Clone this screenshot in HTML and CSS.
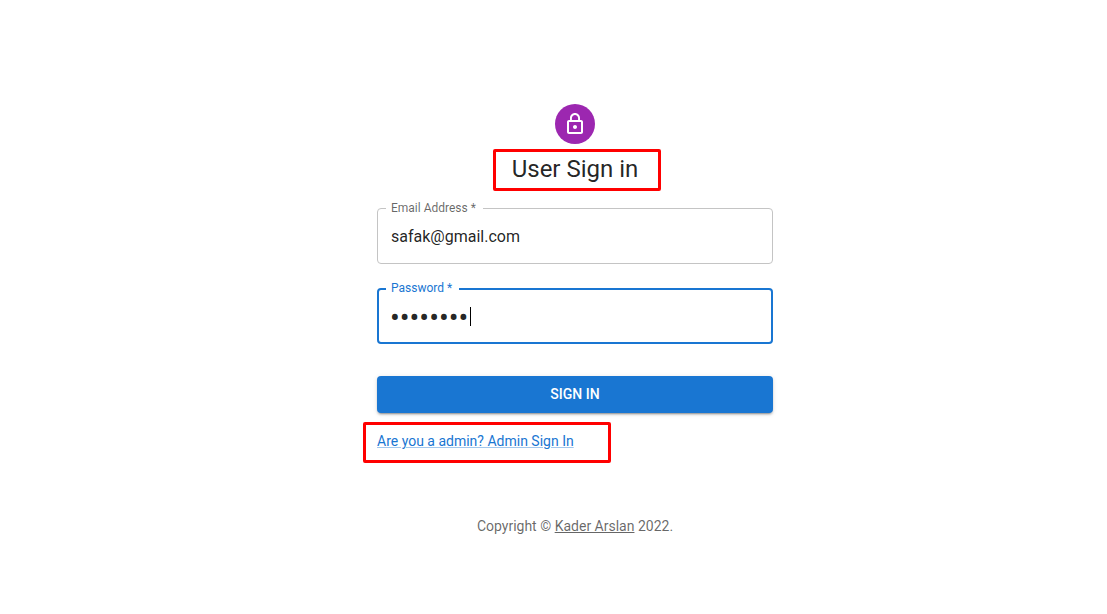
FILE: index.html
```
<!DOCTYPE html>
<html lang="en">
<head>
  <meta charset="utf-8">
  <meta name="viewport" content="width=device-width, initial-scale=1">
  <title>User Sign in</title>
  <link rel="stylesheet" href="styles.css">
</head>
<body>
  <main class="page">
    <div class="avatar">
      <svg class="avatar-icon" viewBox="0 0 24 24" aria-hidden="true"><path d="M12 17c1.100 0 2-.9 2-2s-.9-2-2-2-2 .9-2 2 .9 2 2 2zm6-9h-1V6c0-2.760-2.240-5-5-5S7 3.240 7 6v2H6c-1.100 0-2 .9-2 2v10c0 1.100.9 2 2 2h12c1.100 0 2-.9 2-2V10c0-1.100-.9-2-2-2zM8.900 6c0-1.710 1.390-3.100 3.100-3.100s3.100 1.390 3.100 3.100v2H8.900V6zM18 20H6V10h12v10z"/></svg>
    </div>
    <h1 class="title">User Sign in</h1>
    <form class="form">
      <div class="field">
        <label class="label" for="email">Email Address *</label>
        <input class="input" id="email" type="email" value="safak@gmail.com" required>
      </div>
      <div class="field field-active">
        <label class="label" for="password">Password *</label>
        <input class="input" id="password" type="password" value="password" required>
        <span class="caret"></span>
      </div>
      <button class="submit" type="submit">Sign In</button>
      <div class="switch"><a class="switch-link" href="#">Are you a admin? Admin Sign In</a></div>
    </form>
    <p class="copyright">Copyright © <a class="author" href="#">Kader Arslan</a> 2022.</p>
  </main>
</body>
</html>
```
FILE: styles.css
```
*, *::before, *::after {
  box-sizing: border-box;
}

body {
  margin: 0;
  padding-left: 43px;
  background: #fff;
  color: rgba(0, 0, 0, 0.87);
  font: 400 16px/24px Roboto, "Liberation Sans", sans-serif;
}

.page {
  display: flex;
  flex-direction: column;
  align-items: center;
  max-width: 444px;
  margin: 0 auto;
  padding: 104px 24px 24px;
}

.avatar {
  display: flex;
  align-items: center;
  justify-content: center;
  width: 40px;
  height: 40px;
  margin-bottom: 8px;
  border-radius: 50%;
  background: #9c27b0;
}

.avatar-icon {
  width: 24px;
  height: 24px;
  fill: #fff;
}

.title {
  position: relative;
  margin: 0;
  font-size: 24px;
  font-weight: 400;
  line-height: 34px;
}

/* Red highlight frames */
.title::after,
.switch::after {
  content: "";
  position: absolute;
  border: 3px solid #f00;
  border-radius: 2px;
  pointer-events: none;
}

.title::after {
  inset: -3px -23px -5px -19px;
}

.form {
  display: flex;
  flex-direction: column;
  gap: 24px;
  width: 100%;
  margin-top: 22px;
}

.field {
  position: relative;
}

.label {
  position: absolute;
  top: -8px;
  left: 9px;
  padding: 0 7px 0 5px;
  background: #fff;
  color: rgba(0, 0, 0, 0.6);
  font-size: 12px;
  line-height: 16px;
}

.input {
  display: block;
  width: 100%;
  height: 56px;
  padding: 0 13px;
  border: 1px solid #c4c4c4;
  border-radius: 4px;
  outline: 0;
  background: #fff;
  color: inherit;
  font: inherit;
}

.field-active .input {
  padding: 4px 11px 0;
  border: 2px solid #1976d2;
  font-size: 29px;
}

.field-active .label {
  color: #1976d2;
}

.caret {
  position: absolute;
  top: 19px;
  left: 93px;
  width: 1px;
  height: 19px;
  background: #000;
}

.submit {
  margin-top: 8px;
  padding: 6px 16px;
  border: 0;
  border-radius: 4px;
  background: #1976d2;
  box-shadow: 0 3px 1px -2px rgba(0, 0, 0, 0.2), 0 2px 2px 0 rgba(0, 0, 0, 0.14), 0 1px 5px 0 rgba(0, 0, 0, 0.12);
  color: #fff;
  font: 500 14px/25px Roboto, "Liberation Sans", sans-serif;
  text-transform: uppercase;
}

.switch {
  position: relative;
  align-self: flex-start;
  margin-top: -6px;
  font-size: 14px;
  line-height: 20px;
}

.switch::after {
  inset: -9px -37px -12px -14px;
}

.switch-link {
  color: #1976d2;
  text-decoration-color: rgba(25, 118, 210, 0.4);
}

.copyright {
  margin: 65px 0 0;
  color: rgba(0, 0, 0, 0.6);
  font-size: 14px;
  line-height: 20px;
}

.author {
  color: inherit;
}
```
